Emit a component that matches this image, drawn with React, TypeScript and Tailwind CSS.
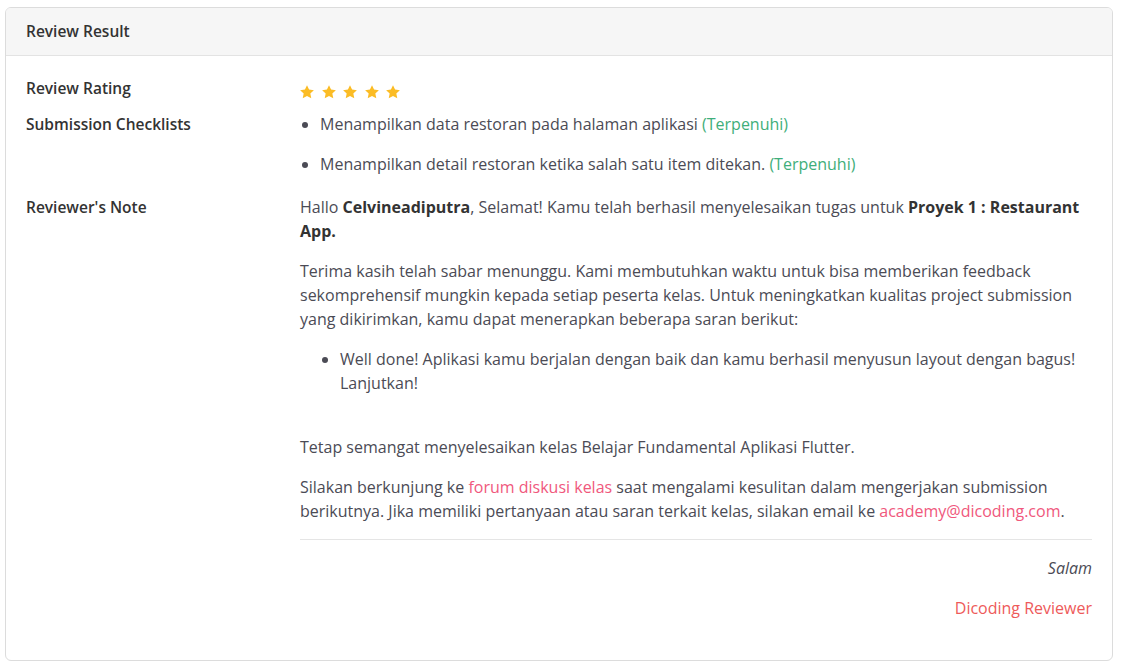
function Star() {
  return (
    <svg width="16" height="16" viewBox="0 0 24 24" className="fill-[#fbbc25]">
      <path d="M12 1.8l3.1 6.6 7.2.9-5.3 5 1.4 7.1L12 17.9l-6.4 3.5 1.4-7.1-5.3-5 7.2-.9z" />
    </svg>
  );
}

function App() {
  return (
    <div className="bg-white pt-[7px] pl-[5px] pr-[11px] pb-[7px] font-['Open_Sans',sans-serif] text-[16px] text-[#4b4b55]">
      <div className="border border-[#dcdcdc] rounded-md overflow-hidden">
        <div className="h-12 bg-[#f6f6f6] border-b border-[#e3e3e3] px-5 flex items-center">
          <h2 className="font-semibold text-[#333] text-[15.5px]">Review Result</h2>
        </div>
        <div className="px-5 pt-[20px] pb-10 flex flex-col gap-[12px]">
          <div className="flex">
            <div className="w-[274px] font-semibold text-[#333] text-[15.5px] leading-6">Review Rating</div>
            <div className="flex gap-[5.5px] items-center h-6 mt-[4px] -ml-[1px]">
              <Star /><Star /><Star /><Star /><Star />
            </div>
          </div>
          <div className="flex -mt-[4px]">
            <div className="w-[274px] font-semibold text-[#333] text-[15.5px] leading-6">Submission Checklists</div>
            <ul className="list-disc pl-5 flex flex-col gap-4 leading-6">
              <li>Menampilkan data restoran pada halaman aplikasi <span className="text-[#3fae7a]">(Terpenuhi)</span></li>
              <li>Menampilkan detail restoran ketika salah satu item ditekan. <span className="text-[#3fae7a]">(Terpenuhi)</span></li>
            </ul>
          </div>
          <div className="flex mt-[7px]">
            <div className="w-[274px] font-semibold text-[#333] text-[15.5px] leading-6 shrink-0">Reviewer's Note</div>
            <div className="flex-1 leading-6">
              <p>Hallo <b className="text-[#333]">Celvineadiputra</b>, Selamat! Kamu telah berhasil menyelesaikan tugas untuk <b className="text-[#333]">Proyek 1 : Restaurant App.</b></p>
              <p className="mt-4">Terima kasih telah sabar menunggu. Kami membutuhkan waktu untuk bisa memberikan feedback sekomprehensif mungkin kepada setiap peserta kelas. Untuk meningkatkan kualitas project submission yang dikirimkan, kamu dapat menerapkan beberapa saran berikut:</p>
              <ul className="list-disc pl-10 mt-4">
                <li>Well done! Aplikasi kamu berjalan dengan baik dan kamu berhasil menyusun layout dengan bagus! Lanjutkan!</li>
              </ul>
              <p className="mt-10">Tetap semangat menyelesaikan kelas Belajar Fundamental Aplikasi Flutter.</p>
              <p className="mt-4">Silakan berkunjung ke <span className="text-[#f0587d]">forum diskusi kelas</span> saat mengalami kesulitan dalam mengerjakan submission berikutnya. Jika memiliki pertanyaan atau saran terkait kelas, silakan email ke <span className="text-[#f0587d]">academy@dicoding.com</span>.</p>
              <hr className="mt-4 border-[#e5e5e5]" />
              <p className="mt-4 text-right italic">Salam</p>
              <p className="mt-4 text-right text-[#ee5a5a]">Dicoding Reviewer</p>
            </div>
          </div>
        </div>
      </div>
    </div>
  );
}

export default App;
